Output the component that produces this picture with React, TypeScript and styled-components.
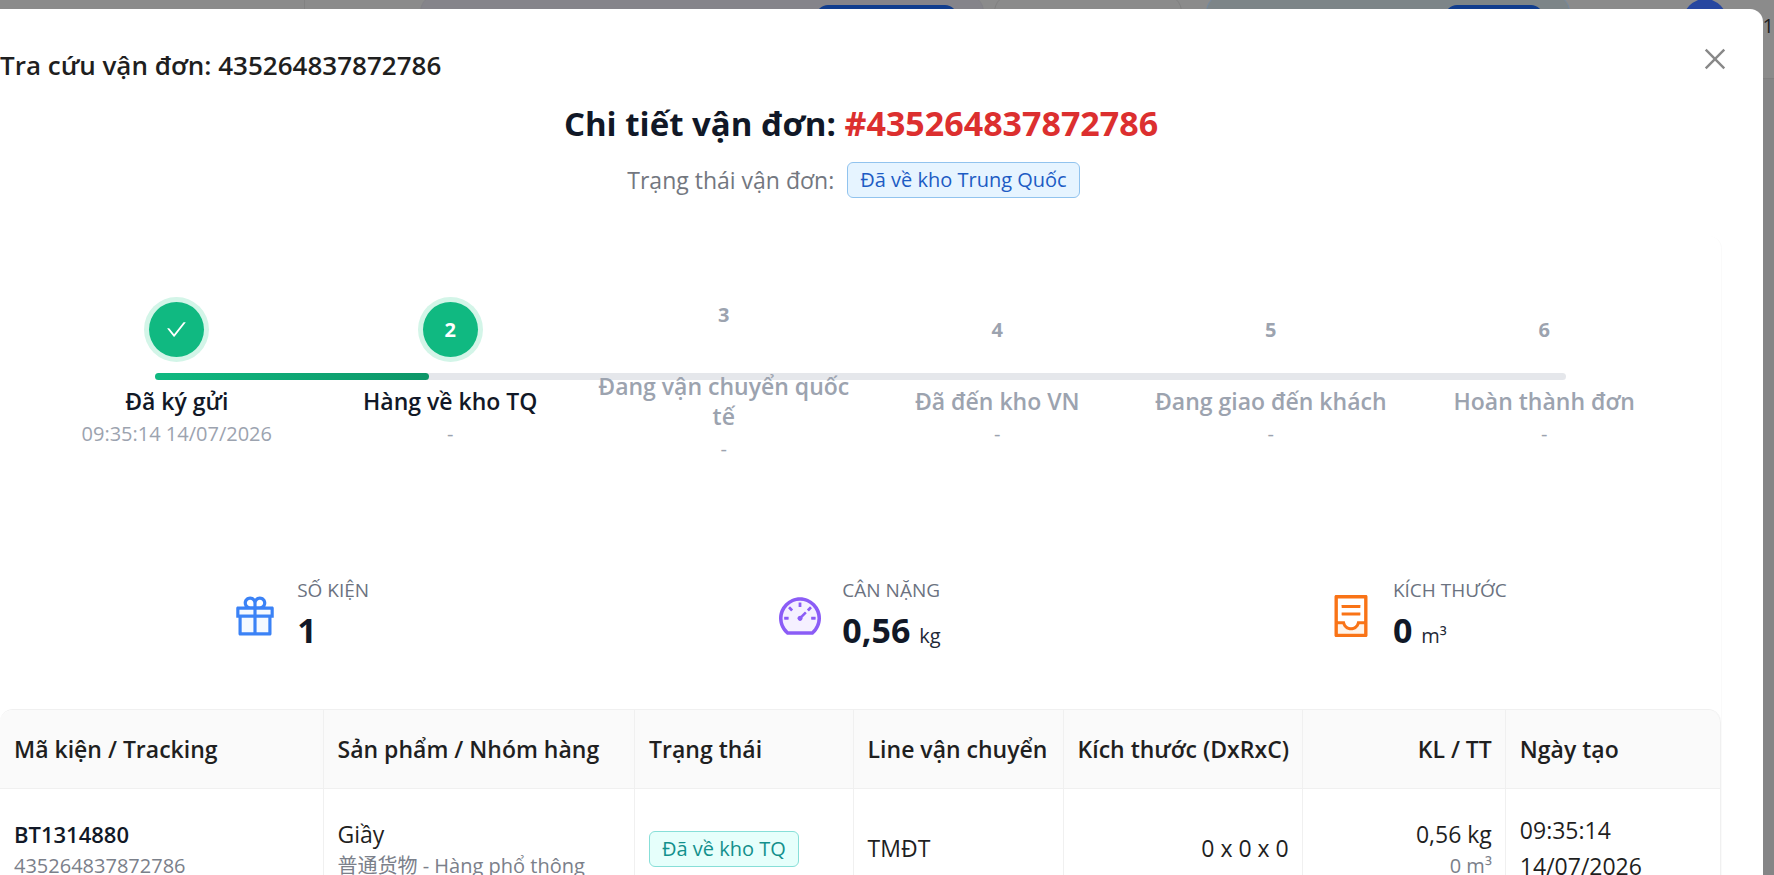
import React from "react";
import styled, { createGlobalStyle } from "styled-components";
import {
  AiOutlineCheck,
  AiOutlineClose,
  AiTwotoneContainer,
  AiTwotoneDashboard,
  AiTwotoneGift,
} from "react-icons/ai";

const GlobalStyle = createGlobalStyle`
  *, *::before, *::after { box-sizing: border-box; }
  body {
    margin: 0;
    color: #1f1f1f;
    font-family: "Open Sans", "Noto Sans", "Noto Sans CJK SC", sans-serif;
    font-size: 23px;
    line-height: 36px;
  }
  h1, h2, p { margin: 0; }
`;

const Screen = styled.div`
  display: grid;
  grid-template-columns: minmax(0, 1fr);
  height: 100vh;
  overflow: hidden;
`;

/* Dimmed page under the dialog */
const Backdrop = styled.div`
  grid-area: 1 / 1;
  background: #858586;
  overflow: hidden;
`;

const TopBar = styled.div`
  display: flex;
  align-items: flex-start;
  height: 79px;
  background: #8b8b8b;
  border-bottom: 1px solid #808080;
`;

const BrandArea = styled.div`
  width: 305px;
  height: 78px;
  border-right: 1px solid #828282;
`;

const BarPanel = styled.div<{ $width: number; $gap: number; $fill: string; $line: string }>`
  display: flex;
  justify-content: flex-end;
  flex: none;
  width: ${(p) => p.$width}px;
  height: 60px;
  margin-top: -6px;
  margin-left: ${(p) => p.$gap}px;
  padding: 10px 26px 0;
  background: ${(p) => p.$fill};
  border: 1px solid ${(p) => p.$line};
  border-radius: 18px;
`;

const BarPill = styled.div<{ $width: number }>`
  width: ${(p) => p.$width}px;
  height: 36px;
  background: #103d8e;
  border-radius: 12px;
`;

const Avatar = styled.div`
  flex: none;
  width: 44px;
  height: 44px;
  margin-top: -1px;
  margin-left: auto;
  background: #2747a0;
  border-radius: 50%;
`;

const AccountName = styled.span`
  flex: none;
  width: 47px;
  padding-top: 8px;
  padding-left: 24px;
  font-size: 20px;
  white-space: nowrap;
`;

const Dialog = styled.section`
  grid-area: 1 / 1;
  z-index: 1;
  margin: 9px 11px 0 0;
  background: #fff;
  border-radius: 0 13px 0 0;
`;

const DialogHeader = styled.header`
  display: flex;
  align-items: flex-start;
  justify-content: space-between;
  padding: 35px 33px 0 0;
`;

const DialogTitle = styled.h1`
  padding-top: 2px;
  font-size: 26px;
  font-weight: 600;
  line-height: 39px;
`;

const CloseButton = styled.button`
  display: flex;
  padding: 0;
  color: #888;
  background: none;
  border: 0;
  font-size: 30px;
  cursor: pointer;
`;

const DialogBody = styled.div`
  padding-right: 41px;
`;

const Heading = styled.h2`
  margin-top: 15px;
  color: #111827;
  font-size: 33px;
  font-weight: 700;
  line-height: 48px;
  text-align: center;
`;

const OrderCode = styled.span`
  color: #dc2f2f;
  font-size: 34px;
  line-height: 1;
`;

const StatusRow = styled.div`
  display: flex;
  align-items: center;
  justify-content: center;
  gap: 13px;
  margin-top: 14px;
  padding-right: 15px;
`;

const StatusLabel = styled.span`
  color: #73777f;
`;

const Tag = styled.span<{ $tone: "blue" | "cyan" }>`
  display: inline-block;
  padding: 0 12px;
  color: ${(p) => (p.$tone === "blue" ? "#1d5cc4" : "#13908c")};
  background: ${(p) => (p.$tone === "blue" ? "#e6f4ff" : "#e6fffb")};
  border: 1px solid ${(p) => (p.$tone === "blue" ? "#91c3ee" : "#87dfd8")};
  border-radius: 6px;
  font-size: 20px;
  line-height: 34px;
  vertical-align: middle;
  white-space: nowrap;
`;

const DetailCard = styled.div`
  margin-top: 38px;
  padding-top: 51px;
  border-right: 1px solid #fafafa;
  border-radius: 0 13px 0 0;
`;

const StepList = styled.ol`
  position: relative;
  display: grid;
  grid-template-columns: repeat(6, minmax(0, 1fr));
  align-items: center;
  margin: 0 40px;
  padding: 0;
  list-style: none;
`;

const Track = styled.li`
  position: absolute;
  top: 50%;
  left: 7%;
  right: 7%;
  height: 7px;
  margin-top: -3px;
  background: #e5e7eb;
  border-radius: 4px;
`;

const TrackFill = styled.div`
  height: 100%;
  background: linear-gradient(90deg, #10b981, #0d9668);
  border-radius: 4px;
`;

const Step = styled.li`
  position: relative;
  display: flex;
  flex-direction: column;
  align-items: center;
  padding: 0 8px;
  text-align: center;
`;

const StepMarker = styled.span<{ $reached: boolean }>`
  display: flex;
  align-items: center;
  justify-content: center;
  width: 55px;
  height: 55px;
  margin-bottom: 29px;
  color: ${(p) => (p.$reached ? "#fff" : "#9ca3af")};
  background: ${(p) => (p.$reached ? "#10b981" : "transparent")};
  border-radius: 50%;
  box-shadow: ${(p) => (p.$reached ? "0 0 0 5px #d3f5e8" : "none")};
  font-size: 20px;
  font-weight: 700;
`;

const StepName = styled.span<{ $reached: boolean }>`
  color: ${(p) => (p.$reached ? "#111827" : "#9ca3af")};
  font-weight: 600;
  line-height: 30px;
`;

const StepTime = styled.span`
  margin-top: 3px;
  color: #9ca3af;
  font-size: 20px;
  line-height: 30px;
`;

const Stats = styled.div`
  display: grid;
  grid-template-columns: repeat(3, minmax(0, 1fr));
  margin-top: 112px;
  padding: 0 25px 0 21px;
`;

const Stat = styled.div`
  display: flex;
  align-items: center;
  justify-content: center;
  gap: 18px;
`;

const StatIcon = styled.span<{ $color: string; $tint: string }>`
  display: flex;
  color: ${(p) => p.$color};
  font-size: 48px;

  path[fill="#D9D9D9"], path[fill="#E6E6E6"] { fill: ${(p) => p.$tint}; }
`;

const StatLabel = styled.p`
  color: #6b7280;
  font-size: 19px;
  line-height: 29px;
`;

const StatValue = styled.p`
  color: #111827;
  font-size: 34px;
  font-weight: 700;
  line-height: 50px;
`;

const StatUnit = styled.span`
  color: #1f2937;
  font-size: 20px;
  font-weight: 400;
  line-height: 1;
`;

const ParcelTable = styled.table`
  width: 100%;
  margin-top: 54px;
  table-layout: fixed;
  border-collapse: separate;
  border-spacing: 0;
  border-top: 1px solid #f0f0f0;
  border-radius: 13px 13px 0 0;
  overflow: hidden;
`;

const Column = styled.col<{ $share: string }>`
  width: ${(p) => p.$share};
`;

const HeadCell = styled.th<{ $align?: "right" }>`
  height: 79px;
  padding: 0 13px 0 14px;
  background: #fafafa;
  border-right: 1px solid #f0f0f0;
  border-bottom: 1px solid #f0f0f0;
  font-weight: 600;
  text-align: ${(p) => p.$align ?? "left"};
  white-space: nowrap;

  &:last-child { border-top-right-radius: 13px; }
`;

const Cell = styled.td<{ $align?: "right" }>`
  padding: 23px 13px 23px 14px;
  border-right: 1px solid #f0f0f0;
  border-bottom: 1px solid #f0f0f0;
  text-align: ${(p) => p.$align ?? "left"};
  vertical-align: middle;
`;

const ParcelCode = styled.div`
  color: #111827;
  font-size: 22px;
  font-weight: 600;
`;

const SubText = styled.div`
  color: #7b808a;
  font-size: 20px;
  line-height: 28px;
  white-space: nowrap;
`;

const steps = [
  { name: "Đã ký gửi", time: "09:35:14 14/07/2026", done: true, reached: true },
  { name: "Hàng về kho TQ", time: "-", done: false, reached: true },
  { name: "Đang vận chuyển quốc tế", time: "-", done: false, reached: false },
  { name: "Đã đến kho VN", time: "-", done: false, reached: false },
  { name: "Đang giao đến khách", time: "-", done: false, reached: false },
  { name: "Hoàn thành đơn", time: "-", done: false, reached: false },
];

const stats = [
  { label: "SỐ KIỆN", value: "1", unit: "", Icon: AiTwotoneGift, color: "#3b82f6", tint: "#f5f9ff" },
  { label: "CÂN NẶNG", value: "0,56", unit: "kg", Icon: AiTwotoneDashboard, color: "#8b5cf6", tint: "#f5f0ff" },
  { label: "KÍCH THƯỚC", value: "0", unit: "m³", Icon: AiTwotoneContainer, color: "#f97316", tint: "#fff3e8" },
];

const columns: { title: string; share: string; align?: "right" }[] = [
  { title: "Mã kiện / Tracking", share: "18.8%" },
  { title: "Sản phẩm / Nhóm hàng", share: "18.1%" },
  { title: "Trạng thái", share: "12.7%" },
  { title: "Line vận chuyển", share: "12.2%" },
  { title: "Kích thước (DxRxC)", share: "13.9%", align: "right" },
  { title: "KL / TT", share: "11.8%", align: "right" },
  { title: "Ngày tạo", share: "12.5%" },
];

const trackingCode = "435264837872786";
const progress = 19.4;

export default function App() {
  return (
    <Screen>
      <GlobalStyle />
      <Backdrop aria-hidden="true">
        <TopBar>
          <BrandArea />
          <BarPanel $width={564} $gap={115} $fill="#85848a" $line="#828287">
            <BarPill $width={141} />
          </BarPanel>
          <BarPanel $width={188} $gap={10} $fill="#8b8b8b" $line="#808080" />
          <BarPanel $width={364} $gap={24} $fill="#7d8588" $line="#7489a0">
            <BarPill $width={98} />
          </BarPanel>
          <Avatar />
          <AccountName>01</AccountName>
        </TopBar>
      </Backdrop>

      <Dialog role="dialog" aria-labelledby="dialog-title">
        <DialogHeader>
          <DialogTitle id="dialog-title">Tra cứu vận đơn: {trackingCode}</DialogTitle>
          <CloseButton type="button" aria-label="Đóng">
            <AiOutlineClose />
          </CloseButton>
        </DialogHeader>

        <DialogBody>
          <Heading>
            Chi tiết vận đơn: <OrderCode>#{trackingCode}</OrderCode>
          </Heading>
          <StatusRow>
            <StatusLabel>Trạng thái vận đơn:</StatusLabel>
            <Tag $tone="blue">Đã về kho Trung Quốc</Tag>
          </StatusRow>

          <DetailCard>
            <StepList>
              <Track aria-hidden="true">
                <TrackFill style={{ width: `${progress}%` }} />
              </Track>
              {steps.map((step, index) => (
                <Step key={step.name}>
                  <StepMarker $reached={step.reached}>
                    {step.done ? <AiOutlineCheck size={23} /> : index + 1}
                  </StepMarker>
                  <StepName $reached={step.reached}>{step.name}</StepName>
                  <StepTime>{step.time}</StepTime>
                </Step>
              ))}
            </StepList>

            <Stats>
              {stats.map(({ label, value, unit, Icon, color, tint }) => (
                <Stat key={label}>
                  <StatIcon $color={color} $tint={tint}>
                    <Icon />
                  </StatIcon>
                  <div>
                    <StatLabel>{label}</StatLabel>
                    <StatValue>
                      {value} {unit && <StatUnit>{unit}</StatUnit>}
                    </StatValue>
                  </div>
                </Stat>
              ))}
            </Stats>

            <ParcelTable>
              <colgroup>
                {columns.map((column) => (
                  <Column key={column.title} $share={column.share} />
                ))}
              </colgroup>
              <thead>
                <tr>
                  {columns.map((column) => (
                    <HeadCell key={column.title} $align={column.align} scope="col">
                      {column.title}
                    </HeadCell>
                  ))}
                </tr>
              </thead>
              <tbody>
                <tr>
                  <Cell>
                    <ParcelCode>BT1314880</ParcelCode>
                    <SubText>{trackingCode}</SubText>
                  </Cell>
                  <Cell>
                    <div>Giầy</div>
                    <SubText>普通货物 - Hàng phổ thông</SubText>
                  </Cell>
                  <Cell>
                    <Tag $tone="cyan">Đã về kho TQ</Tag>
                  </Cell>
                  <Cell>TMĐT</Cell>
                  <Cell $align="right">0 x 0 x 0</Cell>
                  <Cell $align="right">
                    <div>0,56 kg</div>
                    <SubText>0 m³</SubText>
                  </Cell>
                  <Cell>
                    <div>09:35:14</div>
                    <div>14/07/2026</div>
                  </Cell>
                </tr>
              </tbody>
            </ParcelTable>
          </DetailCard>
        </DialogBody>
      </Dialog>
    </Screen>
  );
}
